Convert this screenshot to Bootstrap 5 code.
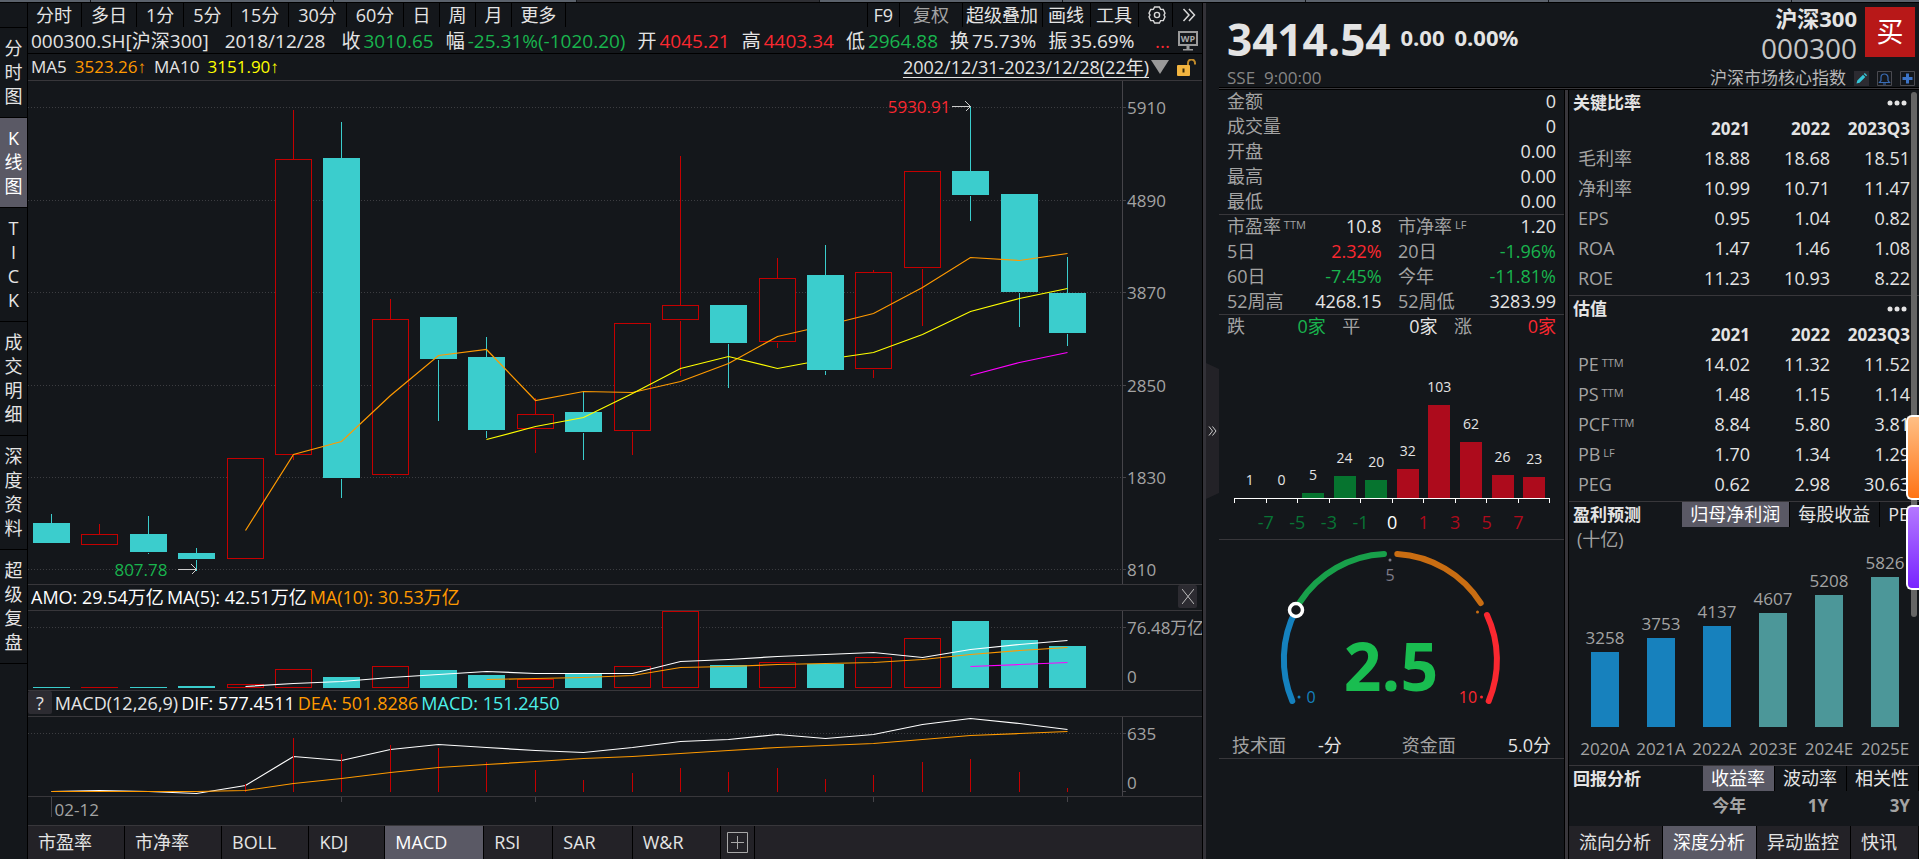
<!DOCTYPE html>
<html lang="zh-CN">
<head>
<meta charset="utf-8">
<meta name="viewport" content="width=device-width, initial-scale=1">
<title>沪深300 000300.SH</title>
<link href="https://cdn.jsdelivr.net/npm/bootstrap@5.3.0/dist/css/bootstrap.min.css" rel="stylesheet">
<style>
:root{--bg:#14171b;--line:#38373b;--panel:#232227;--sel:#5a5965;--txt:#e4e4e4;--dim:#a3a3a3;--up:#fa2830;--down:#19b44e;--cy:#3bcdcd;--org:#ff9a00}
body{background:var(--bg);color:var(--txt);font-family:"Open Sans","Noto Sans CJK SC",sans-serif;font-size:18px;line-height:24px}
button{background:none;border:0;color:inherit;padding:0;white-space:nowrap}
.dim{color:var(--dim)}.up{color:var(--up)}.down{color:var(--down)}.org{color:var(--org)}.yel{color:#ff0}.aqua{color:#4df0ea}.lit{color:#fff}
.strip{height:3px;border-bottom:1px solid #000}
.strip i{flex:0 0 243px;background:#5b626c;border-right:1px solid var(--bg)}
.strip i:first-child{flex-basis:91px}.strip i:last-child{flex:1 1 0;border:0}.strip i.off{background:#2e2f34}
.quote-pane{border-right:1px solid #000}
.toolbar{height:24px;padding-left:27px}
.toolbar button{border-left:1px solid #000;padding:0 9px 0 8px;height:24px}
.toolbar button.span{padding:0 9px}
.toolbar button.tight{padding:0 6px 0 5px}
.toolbar button.snug{padding:0 4px 0 3px}
.toolbar button.wide{padding:0 13px}
.toolbar button.end{border-right:1px solid #000}
.rail{width:28px;border-right:1px solid #000;border-top:1px solid #000}
.rail button{display:block;width:27px;padding:8px 0 9px;border-bottom:1px solid #000;line-height:24px}
.on{background:var(--sel)!important;color:#fff}
.info{height:27px;font-size:19px;gap:12px;padding:2px 4px 0 3px;border-bottom:1px solid #000;white-space:nowrap}
.info .pair{display:flex;gap:3px}
.legend{height:26px;gap:3px;padding:0 5px 2px 3px;border-bottom:1px solid var(--line);white-space:nowrap}
.legend.tall{height:27px;font-size:17px;gap:8px;padding-bottom:0}
.arw{font-family:"Liberation Sans",sans-serif}
.legend a{font-size:18px;color:var(--txt);text-underline-offset:3px}
.sq{background:#2c2b31;border-radius:2px;height:23px}
.plot{border-bottom:1px solid var(--line);overflow:hidden}
.plot.low{height:80px}
.plot svg{display:block;width:100%;height:100%}
.plot text{font-size:17px;fill:#a3a3a3}
.dates{height:29px;border-bottom:1px solid var(--line)}
.inds{height:33px;background:var(--panel)}
.inds button{border-right:1px solid #000;padding:0 32px 2px 10px}
.inds button.wide{padding-right:36px}
.inds button.add{padding:0 6px}
.side{width:716px;border-left:3px solid #333238}
.fold{width:13px}
.fold button{width:13px;height:136px;background:var(--panel);clip-path:polygon(0 0,100% 6px,100% 130px,0 100%)}
.head{height:84px;overflow:hidden}
.rule3{height:3px;background:var(--line);border-top:1px solid #000;border-bottom:1px solid #000}
.quote{gap:10px;padding-top:6px}
.price-now{font-size:44px;font-weight:700;line-height:60px}
.chg{font-size:22px;font-weight:700;line-height:28px;padding-top:14px}
.venue{font-size:17px;line-height:18px;color:#858585}
.nm{font-size:22px;font-weight:700;line-height:30px}
.code{font-size:28px;line-height:30px;color:#c6c6c6}
.buy{width:50px;height:50px;background:#b81818;color:#fff;font-size:27px}
.mid{width:346px;border-right:1px solid #000}
.facts{width:100%;table-layout:fixed}
.facts td,.facts th{height:25px;line-height:20px;padding:0 0 3px;font-weight:400;white-space:nowrap;vertical-align:middle}
.facts td{text-align:right}.facts th{color:var(--dim);text-align:left}
.box{height:100px;padding:0 8px;border-bottom:1px solid var(--line)}
.box.five{height:125px}.box.one{height:25px;border:0}
.tag{font-size:11px;line-height:11px;vertical-align:4px;color:var(--dim)}
.split{width:4px;background:#38363b;border-right:1px solid #000}
.dist{height:200px;padding:0 14px 0 15px;border-bottom:1px solid var(--line)}
.cols{border-bottom:1px solid #fff}
.cols>div{flex:1 1 0;display:flex;flex-direction:column;justify-content:flex-end;align-items:center;font-size:14px;line-height:20px;gap:8px}
.cols .bar{width:22px;display:block}
.ticks{height:4px;border:1px solid #fff;border-width:0 1px}
.ticks i{flex:1 1 0}.ticks i+i{border-left:1px solid #fff}
.scale{height:36px;padding:7px 16px 0}
.scale span{flex:1 1 0;text-align:center}
.gn{color:#087435}.rd{color:#ad0b1c}
.gauge{height:219px;border-bottom:1px solid var(--line)}
.gauge svg{display:block;width:100%;height:190px}
.deep{position:relative;min-width:0}
.ttl{height:25px;padding-left:4px;font-size:17px;font-weight:700;white-space:nowrap}
.ttl .tabs{font-size:18px;font-weight:400}
.ttl .tabs button{height:25px;padding:0 9px 1px 8px;border-right:1px solid #000}
.fin{width:341px;table-layout:fixed}
.fin th,.fin td{width:80px;height:30px;padding:0;text-align:right;font-weight:400;line-height:26px;vertical-align:middle}
.fin thead th{height:28px;font-size:17px;font-weight:700}
.fin th:first-child{width:101px;white-space:nowrap}
.fin tbody th{text-align:left;padding-left:9px;color:var(--dim)}
.sect{border-bottom:1px solid var(--line)}
.sect.num{padding-bottom:2px}
.fc{height:210px;padding:0 6px 0 8px}
.fc>div{flex:1 1 0;display:flex;flex-direction:column;justify-content:flex-end;align-items:center;font-size:17px;color:var(--dim);line-height:24px}
.fc .bar{width:28px;display:block;margin:2px 0 10px}
.ret{width:341px;font-size:17px;font-weight:700;color:var(--dim);height:30px}
.foot{height:33px;background:var(--panel)}
.foot button{padding:0 11px 2px 10px;border-right:1px solid #000}
.thumb{position:absolute;right:2px;top:2px;width:6px;height:525px;background:#666;border-radius:3px}
.float{position:absolute;right:0;width:13px;height:85px;border:2px solid #fff;border-right:0;border-radius:6px 0 0 6px}
.float.o{top:325px;background:linear-gradient(#ffbf85,#ff7416)}
.float.p{top:415px;background:linear-gradient(#b478ff,#7824ff)}
</style>
</head>
<body class="vh-100 d-flex flex-column overflow-hidden">
<div class="strip d-flex flex-shrink-0"><i></i><i></i><i></i><i class="off"></i><i></i><i></i><i></i><i></i><i></i></div>
<div class="d-flex flex-grow-1" style="min-height:0">

<main class="quote-pane flex-grow-1 d-flex flex-column" style="min-width:0">
  <div class="toolbar d-flex flex-shrink-0">
    <button>分时</button><button class="span">多日</button><button class="span">1分</button><button class="span">5分</button><button class="span">15分</button><button class="span">30分</button><button class="span">60分</button><button>日</button><button>周</button><button>月</button><button class="end">更多</button>
    <button class="ms-auto tight">F9</button><button class="dim wide">复权</button><button class="snug">超级叠加</button><button class="tight">画线</button><button class="tight">工具</button>
    <button class="tight" aria-label="设置"><svg class="d-block ms-1" width="18" height="18" viewBox="0 0 18 18" fill="none" stroke="#d8d8d8" stroke-width="1.4"><path d="M6.600 1h4.800l1.200 2.400 2.700.1L17 7.200l-1 1.800 1 1.800-1.700 3.700-2.700.1L11.400 17H6.600l-1.200-2.400-2.700-.1L1 10.800 2 9 1 7.200l1.700-3.700 2.700-.1z"/><circle cx="9" cy="9" r="2.600"/></svg></button>
    <button class="tight" aria-label="展开"><svg class="d-block ms-1" width="14" height="14" viewBox="0 0 14 14" fill="none" stroke="#d8d8d8" stroke-width="1.500"><path d="M1.500 1l5.500 6-5.500 6M7 1l5.500 6L7 13"/></svg></button>
  </div>
  <div class="d-flex flex-grow-1" style="min-height:0">
    <nav class="rail flex-shrink-0">
      <button>分<br>时<br>图</button><button class="on">K<br>线<br>图</button><button>T<br>I<br>C<br>K</button><button>成<br>交<br>明<br>细</button><button>深<br>度<br>资<br>料</button><button>超<br>级<br>复<br>盘</button>
    </nav>
    <div class="flex-grow-1 d-flex flex-column" style="min-width:0">
      <div class="info d-flex align-items-center flex-shrink-0">
        <span class="me-1">000300.SH[沪深300]</span><span class="me-1">2018/12/28</span>
        <span class="pair">收<span class="down">3010.65</span></span><span class="pair">幅<span class="down">-25.31%(-1020.20)</span></span><span class="pair">开<span class="up">4045.21</span></span><span class="pair">高<span class="up">4403.34</span></span><span class="pair">低<span class="down">2964.88</span></span><span class="pair">换<span>75.73%</span></span><span class="pair">振<span>35.69%</span></span>
        <span class="up ms-auto">...</span>
        <svg style="margin-left:-4px" width="20" height="20" viewBox="0 0 20 20"><rect x="1" y="1" width="18" height="13" fill="none" stroke="#9a9a9a" stroke-width="2"/><path d="M8.500 15h3v3h-3zM5 18h10v1.500H5z" fill="#9a9a9a"/><text x="10" y="11" font-size="9" font-weight="700" fill="#a8a8a8" text-anchor="middle">WP</text></svg>
      </div>
      <div class="legend tall d-flex align-items-center flex-shrink-0">
        <span>MA5</span><span class="org">3523.26<span class="arw">↑</span></span><span>MA10</span><span class="yel">3151.90<span class="arw">↑</span></span>
        <a href="#" class="ms-auto">2002/12/31-2023/12/28(22年)</a>
        <svg width="18" height="14" viewBox="0 0 18 14" style="margin-left:-6px"><path d="M0 0h18L9 14z" fill="#999"/></svg>
        <svg width="20" height="17" viewBox="0 0 20 17"><rect x="0" y="6" width="13" height="11" rx="1" fill="#f3b540"/><path d="M11 6V4a3.500 3.500 0 0 1 7 0v1.500" fill="none" stroke="#c08a2a" stroke-width="2"/><path d="M5.500 9.500h2v4h-2z" fill="#3a2a08"/></svg>
      </div>
      <div class="plot flex-grow-1" style="min-height:0"><svg id="price" role="img" aria-label="K线"></svg></div>
      <div class="legend d-flex align-items-center flex-shrink-0 lit"><span>AMO: 29.54万亿</span><span>MA(5): 42.51万亿</span><span class="org">MA(10): 30.53万亿</span>
        <button class="sq ms-auto px-1 flex-shrink-0" style="width:19px" aria-label="关闭"><svg class="d-block" width="12" height="15" viewBox="0 0 12 15" stroke="#bbb" fill="none"><path d="M0 0l12 15M12 0L0 15"/></svg></button></div>
      <div class="plot low flex-shrink-0"><svg id="volume" role="img" aria-label="成交额"></svg></div>
      <div class="legend d-flex align-items-center flex-shrink-0 ps-0"><button class="sq px-2">?</button><span>MACD(12,26,9)</span><span class="lit">DIF: 577.4511</span><span class="org">DEA: 501.8286</span><span class="aqua">MACD: 151.2450</span></div>
      <div class="plot low flex-shrink-0"><svg id="macd" role="img" aria-label="MACD"></svg></div>
      <div class="plot dates flex-shrink-0"><svg id="dates"></svg></div>
      <div class="inds d-flex flex-shrink-0"><button>市盈率</button><button>市净率</button><button>BOLL</button><button class="wide">KDJ</button><button class="on wide">MACD</button><button>RSI</button><button class="wide">SAR</button><button class="wide">W&amp;R</button>
        <button class="add" aria-label="添加"><svg class="d-block" width="21" height="21" viewBox="0 0 21 21" fill="none" stroke="#a8a8a8"><path d="M.5.5h20v20H.5zM4 10.500h13M10.500 4v13"/></svg></button></div>
    </div>
  </div>
</main>

<aside class="side d-flex flex-shrink-0">
  <div class="fold d-flex align-items-center flex-shrink-0"><button aria-label="收起"><svg class="d-block mx-auto" width="9" height="10" viewBox="0 0 9 10" fill="none" stroke="#ccc"><path d="M1 .5L4.500 5 1 9.500M4.500 .5L8 5 4.500 9.500"/></svg></button></div>
  <div class="flex-grow-1 d-flex flex-column" style="min-width:0">
    <header class="head d-flex flex-shrink-0 ps-2">
      <div class="d-flex flex-column justify-content-between"><div class="quote d-flex"><span class="price-now">3414.54</span><span class="chg">0.00</span><span class="chg">0.00%</span></div><div class="venue">SSE&nbsp; 9:00:00</div></div>
      <div class="ms-auto d-flex flex-column justify-content-between">
        <div class="d-flex gap-2 justify-content-end pe-1"><div class="text-end"><div class="nm">沪深300</div><div class="code">000300</div></div><button class="buy mt-1">买</button></div>
        <div class="d-flex gap-2 pe-1 venue align-items-center" style="color:#b8b8b8"><span>沪深市场核心指数</span>
          <svg width="15" height="15" viewBox="0 0 15 15"><path fill="#2c2b31" d="M0 0h15v15H0z"/><path d="M2.500 12.500l.8-3L9 3.800l2.300 2.300-5.700 5.700zM9.800 3l1-1 2.300 2.300-1 1z" fill="#35c6d8"/></svg>
          <svg width="15" height="15" viewBox="0 0 15 15" fill="none"><path stroke="#4a4a50" d="M.5.5h14v14H.5z"/><path stroke="#3a6cb4" stroke-width="1.200" d="M2.500 11.500h10L11 9.500V6.500a3.500 3.500 0 0 0-7 0v3zM6 13h3"/></svg>
          <svg width="15" height="15" viewBox="0 0 15 15" fill="none"><path stroke="#4a4a50" d="M.5.5h14v14H.5z"/><path stroke="#3c74c8" stroke-width="3" d="M7.500 2.500v10M2.500 7.500h10"/></svg>
        </div>
      </div>
    </header>
    <div class="rule3 flex-shrink-0"></div>
    <div class="d-flex flex-grow-1" style="min-height:0">
      <section class="mid flex-shrink-0">
        <div class="box five"><table class="facts">
          <tr><th>金额</th><td>0</td></tr><tr><th>成交量</th><td>0</td></tr><tr><th>开盘</th><td>0.00</td></tr><tr><th>最高</th><td>0.00</td></tr><tr><th>最低</th><td>0.00</td></tr></table></div>
        <div class="box"><table class="facts"><colgroup><col style="width:26%"><col style="width:21%"><col style="width:5%"><col style="width:22%"><col></colgroup>
          <tr><th>市盈率<span class="tag">&nbsp;TTM</span></th><td>10.8</td><td></td><th>市净率<span class="tag">&nbsp;LF</span></th><td>1.20</td></tr>
          <tr><th>5日</th><td class="up">2.32%</td><td></td><th>20日</th><td class="down">-1.96%</td></tr>
          <tr><th>60日</th><td class="down">-7.45%</td><td></td><th>今年</th><td class="down">-11.81%</td></tr>
          <tr><th>52周高</th><td>4268.15</td><td></td><th>52周低</th><td>3283.99</td></tr></table></div>
        <div class="box one"><table class="facts"><colgroup><col style="width:10%"><col style="width:20%"><col style="width:5%"><col style="width:10%"><col style="width:19%"><col style="width:5%"><col style="width:10%"><col></colgroup>
          <tr><th>跌</th><td class="down">0家</td><td></td><th>平</th><td>0家</td><td></td><th>涨</th><td class="up">0家</td></tr></table></div>
        <div class="dist d-flex flex-column"><div class="cols d-flex flex-grow-1" id="dist"></div><div class="ticks d-flex"><i></i><i></i><i></i><i></i><i></i><i></i><i></i><i></i><i></i><i></i></div>
          <div class="scale d-flex"><span class="gn">-7</span><span class="gn">-5</span><span class="gn">-3</span><span class="gn">-1</span><span class="lit">0</span><span class="rd">1</span><span class="rd">3</span><span class="rd">5</span><span class="rd">7</span></div></div>
        <div class="gauge">
          <svg viewBox="0 0 345 190" fill="none" stroke-width="6" stroke-linecap="round">
            <path d="M73.300 161A106.500 106.500 0 0 1 77 70" stroke="#1581be"/>
            <path d="M81 62A106.500 106.500 0 0 1 165 14" stroke="#18a04a"/>
            <path d="M178.300 14A106.500 106.500 0 0 1 261.700 63" stroke="#c96d12"/>
            <path d="M268 75A106.500 106.500 0 0 1 269.700 161" stroke="#fa2830"/>
            <circle cx="77" cy="70" r="6.500" fill="#14171b" stroke="#fff" stroke-width="3.500"/>
            <circle cx="171" cy="20" r="1.500" fill="#7d7b88"/><circle cx="258.500" cy="72" r="1.500" fill="#c96d12"/><circle cx="80" cy="157" r="1.500" fill="#1581be"/><circle cx="262.500" cy="157" r="1.500" fill="#fa2830"/>
            <g font-size="16" text-anchor="middle"><text x="171" y="41" fill="#7d7b88">5</text><text x="92" y="163" fill="#1581be">0</text><text x="249" y="163" fill="#fa2830">10</text></g>
            <text x="172" y="151" font-size="66" font-weight="700" text-anchor="middle" fill="#19bd50">2.5</text>
          </svg>
          <div class="d-flex" style="padding:3px 13px"><span class="dim">技术面</span><span class="ms-4 ps-2">-分</span><span class="dim mx-auto ps-2">资金面</span><span>5.0分</span></div>
        </div>
      </section>
      <div class="split flex-shrink-0"></div>
      <section class="deep flex-grow-1 d-flex flex-column">
        <div class="sect num"><div class="ttl d-flex align-items-center">关键比率<button class="ms-auto me-2 pe-1" aria-label="更多"><svg class="d-block" width="20" height="6" fill="#e4e4e4"><circle cx="3" cy="3" r="2.500"/><circle cx="10" cy="3" r="2.500"/><circle cx="17" cy="3" r="2.500"/></svg></button></div>
        <table class="fin"><thead><tr><th></th><th>2021</th><th>2022</th><th>2023Q3</th></tr></thead><tbody>
          <tr><th>毛利率</th><td>18.88</td><td>18.68</td><td>18.51</td></tr><tr><th>净利率</th><td>10.99</td><td>10.71</td><td>11.47</td></tr><tr><th>EPS</th><td>0.95</td><td>1.04</td><td>0.82</td></tr><tr><th>ROA</th><td>1.47</td><td>1.46</td><td>1.08</td></tr><tr><th>ROE</th><td>11.23</td><td>10.93</td><td>8.22</td></tr></tbody></table></div>
        <div class="sect num"><div class="ttl d-flex align-items-center">估值<button class="ms-auto me-2 pe-1" aria-label="更多"><svg class="d-block" width="20" height="6" fill="#e4e4e4"><circle cx="3" cy="3" r="2.500"/><circle cx="10" cy="3" r="2.500"/><circle cx="17" cy="3" r="2.500"/></svg></button></div>
        <table class="fin"><thead><tr><th></th><th>2021</th><th>2022</th><th>2023Q3</th></tr></thead><tbody>
          <tr><th>PE<span class="tag">&nbsp;TTM</span></th><td>14.02</td><td>11.32</td><td>11.52</td></tr><tr><th>PS<span class="tag">&nbsp;TTM</span></th><td>1.48</td><td>1.15</td><td>1.14</td></tr><tr><th>PCF<span class="tag">&nbsp;TTM</span></th><td>8.84</td><td>5.80</td><td>3.81</td></tr><tr><th>PB<span class="tag">&nbsp;LF</span></th><td>1.70</td><td>1.34</td><td>1.29</td></tr><tr><th>PEG</th><td>0.62</td><td>2.98</td><td>30.63</td></tr></tbody></table></div>
        <div class="sect pb-1"><div class="ttl d-flex align-items-center">盈利预测<div class="tabs d-flex ms-auto"><button class="on">归母净利润</button><button>每股收益</button><button>PE</button></div></div>
          <div class="dim ps-2">(十亿)</div>
          <div class="fc d-flex" id="fc"></div></div>
        <div><div class="ttl d-flex align-items-center">回报分析<div class="tabs d-flex ms-auto"><button class="on">收益率</button><button>波动率</button><button>相关性</button></div></div>
          <div class="ret d-flex text-end align-items-center"><span style="width:52%">今年</span><span style="width:24%">1Y</span><span style="width:24%">3Y</span></div></div>
        <div class="foot d-flex mt-auto overflow-hidden flex-shrink-0"><button>流向分析</button><button class="on">深度分析</button><button>异动监控</button><button class="flex-grow-1 text-start">快讯</button></div>
        <div class="thumb"></div><div class="float o"></div><div class="float p"></div>
      </section>
    </div>
  </div>
</aside>
</div>

<script src="https://cdn.jsdelivr.net/npm/bootstrap@5.3.0/dist/js/bootstrap.bundle.min.js"></script>
<script>
// Levels run downwards. Candle: [rising, high, bodyTop, bodyBottom, low]
const candles=[[0,513,523,543,543],[1,523,534,545,545],[0,515,534,552,553],[0,547,553,559,570],[1,457,458,559,559],[1,109,159,455,459],[0,121,158,478,497],[1,298,319,475,476],[0,317,317,359,420],[0,336,357,430,437],[1,397,414,429,452],[0,390,412,432,459],[1,322,323,431,454],[1,155,305,320,375],[0,305,305,343,387],[1,257,278,342,347],[0,244,275,370,374],[1,269,272,369,377],[1,170,171,268,325],[0,106,171,195,220],[0,193,194,292,326],[0,256,293,333,345]];
const ma5=[530,454,441,395,355,349,400,391,392,381,363,336,325,313,287,257,260,253];
const ma10=[439,426,417,393,368,356,368,359,352,334,311,298,288];
const ma20=[375,362,352];
const vol=[687,687,687,686,684,669,677,666,670,675,679,674,666,611,665,662,664,657,638,621,640,646];
const v5=[686,683,681,677,674,671,673,673,673,661,659,656,654,652,657,649,644,640];
const v10=[679,678,677,675,667,666,664,663,662,659,654,650,647];
const v20=[666,664,662];
const dif=[791,790,791,793,785,756,760,749,744,747,750,752,747,741,739,734,738,734,724,718,723,729];
const dea=[791,791,791,791,790,783,778,772,767,764,761,758,756,753,750,747,745,743,739,735,733,731];
const hist=[783,737,753,744,747,761,769,779,772,767,771,767,778,774,761,758,771,787];
const RED='#c40000',CY='#3bcdcd',GRID='#3c3d41',AX='#454449';

function panel(id,top,span){
  const el=document.getElementById(id),W=el.clientWidth,H=el.clientHeight,P=W-80;
  el.setAttribute('viewBox',`0 0 ${W} ${H}`);
  const x=i=>Math.round(23+(P-78)*i/21)+.5, y=v=>Math.round((v-top)*H/span)+.5;
  let s='';
  const o={W,H,P,x,y,
    line(x1,y1,x2,y2,c,e=''){s+=`<path d="M${x1} ${y1}L${x2} ${y2}" stroke="${c}" ${e} shape-rendering="crispEdges"/>`},
    rect(x,y,w,h,c,f){s+=`<rect x="${x}" y="${y}" width="${w}" height="${h}" stroke="${c}" fill="${f}" shape-rendering="crispEdges"/>`},
    poly(a,c){const k=22-a.length;s+=`<polyline points="${a.map((v,i)=>x(i+k)+','+y(v)).join(' ')}" fill="none" stroke="${c}" stroke-width="1.2"/>`},
    text(tx,ty,t,c,a){s+=`<text x="${tx}" y="${ty+6}" ${c?`style="fill:${c}"`:''} text-anchor="${a||'start'}">${t}</text>`},
    grid(v,t){o.line(0,y(v),P,y(v),GRID,'stroke-dasharray="1 2"');o.line(P,y(v),P+4,y(v),AX);o.text(P+5,y(v),t)},
    done(){el.innerHTML=s}};
  return o;
}
function draw(){
  let p=panel('price',81,503);
  [[107,5910],[200,4890],[292,3870],[385,2850],[477,1830],[569,810]].forEach(g=>p.grid(...g));
  p.line(p.P+.5,0,p.P+.5,p.H,AX);
  const candle=i=>{const [r,h,t,b,l]=candles[i],c=r?RED:CY,x=p.x(i);
    p.line(x,p.y(h),x,p.y(t),c);p.line(x,p.y(b),x,p.y(l),c);
    p.rect(x-18,p.y(t),36,p.y(b)-p.y(t)-1,c,r?'#14171b':CY)};
  candles.forEach((c,i)=>candle(i));
  p.poly(ma5,'#ff9a00');p.poly(ma10,'#ff0');p.poly(ma20,'#f0f');
  candle(16);
  const arrow=(i,v,t,c,g)=>{const x=p.x(i),y=p.y(v);p.line(x-19,y,x,y,'#ccc');p.line(x-5,y-5,x,y,'#ccc');p.line(x-5,y+5,x,y,'#ccc');p.text(x-g,y,t,c,'end')};
  arrow(19,106,'5930.91','#fa2830',20);arrow(3,569,'807.78','#19b44e',29);
  p.done();

  p=panel('volume',611,79);
  p.grid(627,'76.48万亿');p.text(p.P+5,p.y(676),'0');p.line(p.P+.5,0,p.P+.5,p.H,AX);
  vol.forEach((v,i)=>{const c=candles[i][0]?RED:CY,x=p.x(i),y=p.y(v),h=p.y(687)-y;
    h>0?p.rect(x-18,y,36,h,c,candles[i][0]?'#14171b':CY):p.line(x-18.5,y,x+18.5,y,c)});
  p.poly(v5,'#fff');p.poly(v10,'#ff9a00');p.poly(v20,'#f0f');p.done();

  p=panel('macd',717,79);
  p.grid(733,'635');p.text(p.P+5,p.y(782),'0');p.line(p.P+.5,0,p.P+.5,p.H,AX);p.line(p.P,p.y(791),p.P+4,p.y(791),AX);
  p.poly(dif,'#fff');
  hist.forEach((v,i)=>p.line(p.x(i+4),p.y(v),p.x(i+4),p.y(791),RED));
  p.poly(dea,'#ff9a00');p.done();

  p=panel('dates',797,28);
  p.line(p.x(0),0,p.x(0),20,AX);[6,10,17,21].forEach(i=>p.line(p.x(i),0,p.x(i),5,AX));
  p.text(p.x(0)+3,13,'02-12');p.done();
}
document.getElementById('dist').innerHTML=[1,0,5,24,20,32,103,62,26,23].map((v,i)=>`<div><span>${v}</span><i class="bar" style="height:${v<2?0:Math.round(v*.9)}px;background:${i<5?'#06742f':'#ad0b1c'}"></i></div>`).join('');
document.getElementById('fc').innerHTML=[['2020A',3258],['2021A',3753],['2022A',4137],['2023E',4607],['2024E',5208],['2025E',5826]].map(([n,v],i)=>`<div><span>${v}</span><i class="bar" style="height:${Math.round(75+(v-3258)*.0292)}px;background:${i<3?'#1781bd':'#4c9799'}"></i><span>${n}</span></div>`).join('');
draw();
addEventListener('resize',draw);
</script>
</body>
</html>
